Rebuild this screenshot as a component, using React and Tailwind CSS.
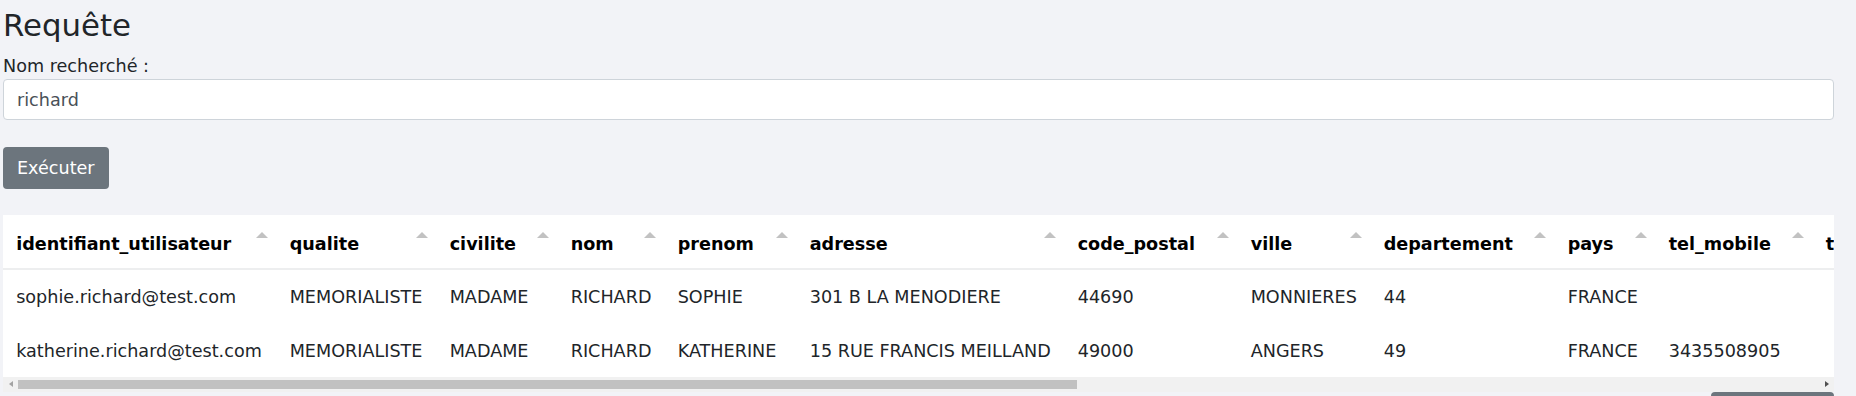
const columns = [
  { key: 'identifiant_utilisateur', w: 'w-[273.5px]' },
  { key: 'qualite', w: 'w-[160px]' },
  { key: 'civilite', w: 'w-[121px]' },
  { key: 'nom', w: 'w-[107px]' },
  { key: 'prenom', w: 'w-[132px]' },
  { key: 'adresse', w: 'w-[268px]' },
  { key: 'code_postal', w: 'w-[173px]' },
  { key: 'ville', w: 'w-[133px]' },
  { key: 'departement', w: 'w-[184px]' },
  { key: 'pays', w: 'w-[101px]' },
  { key: 'tel_mobile', w: 'w-[157px]' },
  { key: 'tel_fixe', w: 'w-[157px]' },
  { key: 'date_naissance', w: 'w-[200px]' },
  { key: 'date_creation', w: 'w-[220px]' },
  { key: 'date_modification', w: 'w-[240px]' },
  { key: 'statut', w: 'w-[140px]' },
  { key: 'commentaire', w: 'w-[348px]' },
]

const rows = [
  {
    identifiant_utilisateur: 'sophie.richard@test.com',
    qualite: 'MEMORIALISTE',
    civilite: 'MADAME',
    nom: 'RICHARD',
    prenom: 'SOPHIE',
    adresse: '301 B LA MENODIERE',
    code_postal: '44690',
    ville: 'MONNIERES',
    departement: '44',
    pays: 'FRANCE',
    tel_mobile: '',
    tel_fixe: '',
    date_naissance: '1962-04-11',
    date_creation: '2019-03-02',
    date_modification: '2021-06-18',
    statut: 'ACTIF',
    commentaire: '',
  },
  {
    identifiant_utilisateur: 'katherine.richard@test.com',
    qualite: 'MEMORIALISTE',
    civilite: 'MADAME',
    nom: 'RICHARD',
    prenom: 'KATHERINE',
    adresse: '15 RUE FRANCIS MEILLAND',
    code_postal: '49000',
    ville: 'ANGERS',
    departement: '49',
    pays: 'FRANCE',
    tel_mobile: '3435508905',
    tel_fixe: '',
    date_naissance: '1958-09-23',
    date_creation: '2019-05-14',
    date_modification: '2020-11-07',
    statut: 'ACTIF',
    commentaire: '',
  },
]

const SortArrow = () => (
  <span className="absolute top-[17px] right-[9px] w-0 h-0 border-x-[6px] border-x-transparent border-b-[6px] border-b-[#c2c2c2]"></span>
)

// barre de défilement horizontale (style Chrome classique)
const ScrollBar = () => (
  <div className="flex items-center h-[15px] bg-[#f1f1f1]">
    <div className="flex items-center justify-center w-[15px] h-full shrink-0">
      <span className="w-0 h-0 border-y-[3.5px] border-y-transparent border-r-[4px] border-r-[#a3a3a3]"></span>
    </div>
    <div className="flex-1 h-full flex items-center">
      <div className="w-[1059px] h-[9px] bg-[#c1c1c1]"></div>
    </div>
    <div className="flex items-center justify-center w-[15px] h-full shrink-0">
      <span className="w-0 h-0 border-y-[3.5px] border-y-transparent border-l-[4px] border-l-[#505050]"></span>
    </div>
  </div>
)

const App = () => {
  return (
    <div className="h-screen overflow-hidden bg-[#f2f3f7] font-['DejaVu_Sans','Liberation_Sans',sans-serif] text-[17.6px] leading-[26.4px] text-[#212529] pl-[3px] pr-[22px] pt-[7px]">
      <h3 className="text-[30.8px] leading-[1.2] font-normal mb-[8.8px]">Requête</h3>

      <label className="block">Nom recherché :</label>
      <input
        type="text"
        value="richard"
        readOnly
        className="block w-full h-[41px] px-[13px] bg-white border border-[#ced4da] rounded-[4px] text-[#495057] outline-none"
      />

      <button className="mt-[27px] h-[42px] px-[14px] rounded-[4px] bg-[#6c757d] text-white">
        Exécuter
      </button>

      {/* Résultats */}
      <div className="mt-[26px] bg-white">
        <div className="overflow-hidden">
          <table className="table-fixed w-[3114px] border-collapse">
            <thead>
              <tr>
                {columns.map((col) => (
                  <th
                    key={col.key}
                    className={`${col.w} relative text-left font-bold text-black whitespace-nowrap pl-[13.2px] pr-[42px] pt-[16px] pb-[10.4px] border-b-2 border-[#edeeef]`}
                  >
                    {col.key}
                    <SortArrow />
                  </th>
                ))}
              </tr>
            </thead>
            <tbody>
              {rows.map((row) => (
                <tr key={row.identifiant_utilisateur}>
                  {columns.map((col) => (
                    <td
                      key={col.key}
                      className="whitespace-nowrap px-[13.2px] pt-[14.5px] pb-[11.9px] border-t border-white"
                    >
                      {row[col.key]}
                    </td>
                  ))}
                </tr>
              ))}
            </tbody>
          </table>
        </div>
        <ScrollBar />
      </div>

      <div className="flex justify-end">
        <button className="w-[123px] h-[42px] rounded-[4px] bg-[#6c757d] text-white">
          Exporter
        </button>
      </div>
    </div>
  )
}

export default App
